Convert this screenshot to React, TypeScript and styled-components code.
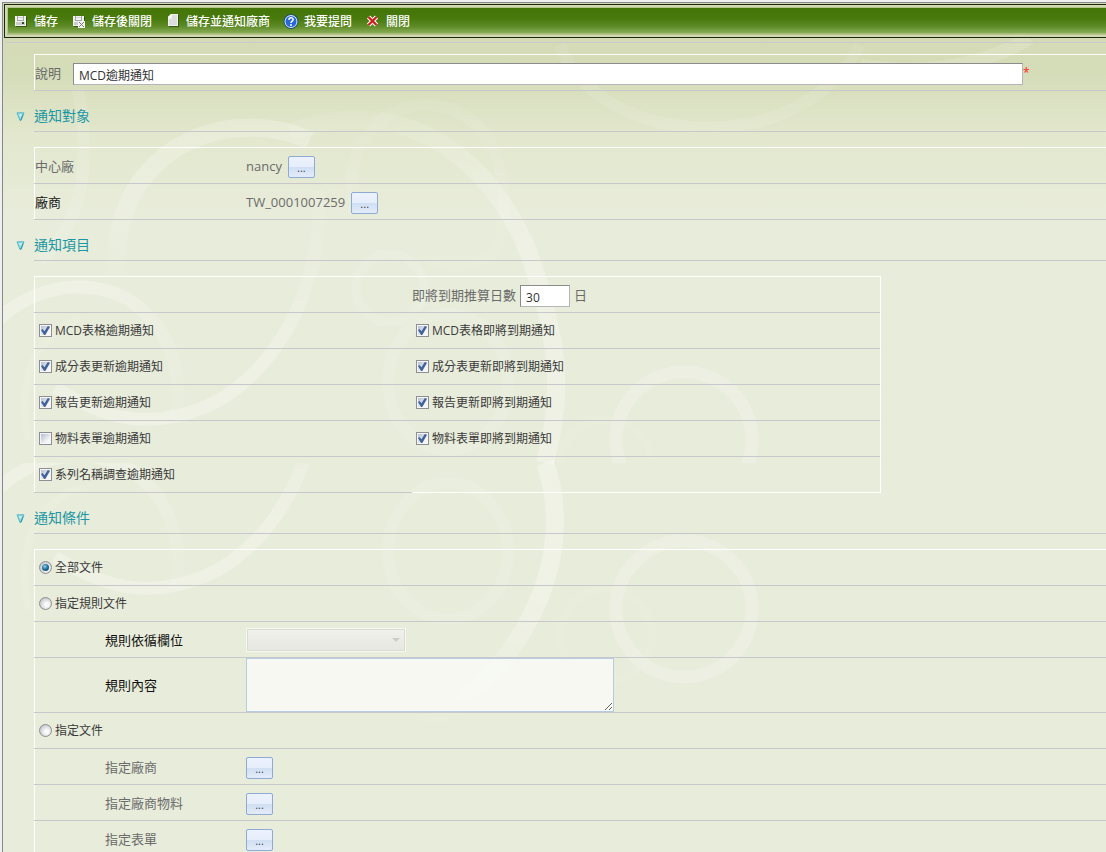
import React, { useState } from "react";
import styled, { createGlobalStyle, css } from "styled-components";

const GlobalStyle = createGlobalStyle`
  *, *::before, *::after { box-sizing: border-box; }
  body {
    margin: 0;
    background: #efefef;
    color: #6b6b6b;
    font: 13px/18px "Open Sans", "Noto Sans CJK TC", sans-serif;
  }
  button, input, select, textarea { font: inherit; color: inherit; margin: 0; }
`;

/* ---------- shell ---------- */

const Shell = styled.div`
  height: 100vh;
  padding: 2px 0 0 2px;
`;

const Frame = styled.div`
  position: relative;
  height: 100%;
  overflow: auto;
  scrollbar-width: none;
  border-top: 1px solid #85888a;
  border-left: 1px solid #85888a;
  padding: 1px 0 0 1px;
  background: linear-gradient(#d2d9b2, #d5dcb8 70px, #e2e7cd 130px, #e8ecda 210px);
`;

const Backdrop = styled.svg`
  position: absolute;
  top: 0;
  left: 0;
  width: 1100px;
  height: 848px;
  pointer-events: none;
`;

const Content = styled.div`
  position: relative;
`;

const ToolbarFrame = styled.div`
  border: 1px solid #1d2812;
  border-right: 0;
  padding: 2px 0 2px 2px;
  background: #d0d9b0;
`;

const Toolbar = styled.div`
  display: flex;
  align-items: center;
  gap: 13px;
  height: 28px;
  padding: 2px 0 0 5px;
  border: 1px solid #b4c48c;
  border-right: 0;
  background: linear-gradient(#447507, #48790d 40%, #5d8a26 70%, #84a951 94%, #b3c78b);
`;

const ToolButton = styled.button`
  display: flex;
  align-items: center;
  gap: 5px;
  padding: 0;
  border: 0;
  background: none;
  color: #fff;
  font-size: 12px;
  font-weight: 500;
  line-height: 18px;
  white-space: nowrap;
  cursor: pointer;

  svg { display: block; flex: none; }
`;

const Rule = styled.hr`
  height: 1px;
  margin: 4px 0 11px 2px;
  border: 0;
  background: #cac9cb;
`;

/* ---------- sections ---------- */

const SectionHeader = styled.div`
  display: flex;
  height: 41px;
  margin-bottom: 15px;
`;

const Toggle = styled.button`
  flex: none;
  width: 30px;
  padding: 10px 0 0 12px;
  border: 0;
  background: none;
  text-align: left;

  svg { display: block; }
`;

const SectionTitle = styled.h2`
  flex: 1;
  margin: 0;
  padding-top: 15px;
  border-bottom: 1px solid #c8c8cc;
  color: #1c97a4;
  font-size: 14px;
  font-weight: 400;
  line-height: 20px;
`;

const Panel = styled.div<{ $boxed?: boolean }>`
  margin-left: 30px;
  border-top: 1px solid #fff;
  border-left: 1px solid #fff;
  ${(p) =>
    p.$boxed &&
    css`
      display: grid;
      grid-template-columns: 378px 1fr;
      max-width: 847px;
      border-right: 1px solid #fff;
    `}
`;

const line = css`
  border-bottom: 1px solid #c8c8cc;
  margin-left: -1px;
  padding-left: 1px;
`;

const Row = styled.div`
  ${line}
  display: flex;
  align-items: center;
  min-height: 36px;
`;

const AreaRow = styled(Row)`
  align-items: stretch;
`;

const Cell = styled(Row)<{ $light?: boolean }>`
  ${(p) => p.$light && "border-bottom-color: #fff;"}

  &:nth-child(even) { padding-left: 0; }
`;

const DaysCell = styled(Cell)`
  gap: 4px;
`;

const Name = styled.label<{ $strong?: boolean; $indent?: boolean }>`
  display: flex;
  align-items: center;
  flex: none;
  width: 211px;
  padding-left: ${(p) => (p.$indent ? 70 : 0)}px;
  color: ${(p) => (p.$strong ? "#111" : "inherit")};
`;

const ShortName = styled.label`
  margin-right: 12px;
`;

const Value = styled.span`
  margin-right: 6px;
`;

const Choice = styled.label`
  display: flex;
  align-items: center;
  gap: 3px;
  padding-left: 4px;
  color: #3a3a3a;
  font-size: 12px;
`;

/* ---------- controls ---------- */

const TextInput = styled.input<{ $short?: boolean }>`
  ${(p) => (p.$short ? "width: 50px;" : "flex: 1; min-width: 0;")}
  height: 22px;
  margin-top: 3px;
  padding: 2px 5px 0;
  border: 1px solid;
  border-color: #8b8b8b #b5b5b9 #b5b5b9 #8b8b8b;
  border-radius: 0;
  outline: 0;
  background: #fff;
  color: #333;
  font-size: 12px;
`;

const Required = styled.span`
  width: 83px;
  color: #ff2020;
  font-size: 12px;
`;

const PickButton = styled.button`
  width: 27px;
  height: 22px;
  margin-top: 2px;
  padding: 2px 0 0;
  border: 1px solid #8fabd4;
  border-radius: 2px;
  background: linear-gradient(#ecf2fd, #e6eefb 48%, #d0dff3 52%, #e3ecfa);
  color: #444;
  font-size: 11px;
  line-height: 18px;
`;

const Check = styled.input`
  appearance: none;
  display: grid;
  place-items: center;
  flex: none;
  width: 13px;
  height: 13px;
  border: 1px solid #8e8f94;
  background: linear-gradient(135deg, #b4bfcf, #f6f6f6 75%) content-box, #f6f6f6;
  padding: 1px;

  &:checked::before {
    content: "";
    width: 9px;
    height: 9px;
    background: #41639c;
    clip-path: polygon(0 45%, 18% 34%, 38% 58%, 76% 0, 100% 8%, 48% 100%, 34% 100%);
  }
`;

const Radio = styled.input`
  appearance: none;
  display: grid;
  place-items: center;
  flex: none;
  width: 13px;
  height: 13px;
  border: 1px solid #8e8f8f;
  border-radius: 50%;
  background: radial-gradient(circle at 60% 60%, #fafafa 20%, #c4c8cc 75%);

  &:checked::before {
    content: "";
    width: 7px;
    height: 7px;
    border-radius: 50%;
    background: radial-gradient(circle at 40% 35%, #8fd3ee, #1c6a97 50%, #123a5a);
  }
`;

const SelectBox = styled.div`
  position: relative;
  display: flex;

  svg {
    position: absolute;
    top: 9px;
    right: 6px;
    pointer-events: none;
  }
`;

const Select = styled.select`
  appearance: none;
  width: 160px;
  height: 24px;
  border: 1px solid #f6f7f1;
  border-radius: 0;
  box-shadow: inset 0 0 0 1px #dadcd2;
  background: linear-gradient(#f0f1ea, #e6e7df);
  opacity: 1;
`;

const Area = styled.textarea`
  display: block;
  width: 368px;
  height: 54px;
  padding: 2px 4px;
  border: 1px solid #b8cbe0;
  border-radius: 0;
  background: rgba(255, 255, 255, 0.62);
`;

/* ---------- drawings ---------- */

const SaveIcon = ({ close }: { close?: boolean }) => (
  <svg width="16" height="16" viewBox="0 0 16 16" shapeRendering="crispEdges" aria-hidden="true">
    <path d="M3 3h11v10H3z" fill="#27450a" opacity=".7" />
    <path d="M2 2h11v10H2z" fill="#f0f1f0" />
    <path d="M4 2h1v4H4zM10 2h1v4h-1zM4 6h7v1H4z" fill="#a4a8a4" />
    <path d="M5 3h5v1H5z" fill="#cfd2cf" />
    <path d="M3 8h9v3H3z" fill="#c9ccc9" />
    <path d="M9 8h2v2H9z" fill="#33501a" />
    {close && (
      <>
        <path d="M7 7h7v7H7z" fill="#f4f4f4" />
        <path d="M8 8h1v1h1v1h1V9h1V8h1v1h-1v1h-1v1h1v1h1v1h-1v-1h-1v-1h-1v1H9v1H8v-1h1v-1h1v-1H9V9H8z" fill="#777" />
      </>
    )}
  </svg>
);

const PageIcon = () => (
  <svg width="16" height="16" viewBox="0 0 16 16" aria-hidden="true">
    <path d="M7 1h7v12H4V5z" fill="#27450a" opacity=".7" />
    <path d="M6 0h7v12H3V3z" fill="#f0f1f0" />
    <path d="M7 1h5v10H4V5h3z" fill="#dcdedc" />
    <path d="M6 0v3H3z" fill="#fff" />
  </svg>
);

const HelpIcon = () => (
  <svg width="16" height="16" viewBox="0 0 16 16" aria-hidden="true">
    <circle cx="8" cy="7.5" r="7.5" fill="#1f4f72" />
    <circle cx="8" cy="7.5" r="6.5" fill="#d9e8fa" />
    <circle cx="8" cy="7.5" r="5.5" fill="#2767d8" />
    <path d="M5.900 5.900c.1-3 4.400-2.700 4.200-.2C10 7.200 8 7.200 8 9" fill="none" stroke="#fff" strokeWidth="1.600" />
    <circle cx="8" cy="11" r="1" fill="#fff" />
  </svg>
);

const CloseIcon = () => (
  <svg width="16" height="16" viewBox="0 0 16 16" aria-hidden="true">
    <path d="M3.500 3l8 8M11.500 3l-8 8" stroke="#fff" strokeWidth="4.400" />
    <path d="M3.500 3l8 8M11.500 3l-8 8" stroke="#c9201a" strokeWidth="2.400" />
  </svg>
);

const ToggleIcon = () => (
  <svg width="9" height="9" viewBox="0 0 9 9" aria-hidden="true">
    <path d="M1 .800h7L5.200 8.200H3.800z" fill="#8fd8e2" stroke="#4fb6c6" strokeWidth=".9" />
    <path d="M2.800 2.200h3.400L4.500 5z" fill="#d6f2f4" />
    <path d="M7 2.500L5 8H4" fill="none" stroke="#2b93a5" strokeWidth=".9" />
  </svg>
);

const Rings = () => (
  <g fill="none" stroke="#fff">
    <path d="M318 190C326 290 270 380 205 407S95 412 55 388" strokeWidth="13" stroke="url(#arc)" />
    <path d="M-4 322C40 278 105 278 140 308S182 380 176 420" strokeWidth="13" stroke="url(#left)" />
    <path d="M28 440C18 380 30 340 80 318" strokeWidth="8" opacity=".1" />
    <ellipse cx="448" cy="382" rx="60" ry="68" strokeWidth="12" opacity=".12" />
    <circle cx="684" cy="440" r="68" strokeWidth="13" opacity=".2" />
    <circle cx="606" cy="466" r="46" strokeWidth="8" opacity=".06" />
  </g>
);

const Fade = ({ id, from, to, box }: { id: string; from: number; to: number; box: number[] }) => (
  <linearGradient id={id} gradientUnits="userSpaceOnUse" x1={box[0]} y1={box[1]} x2={box[2]} y2={box[3]}>
    <stop offset="0" stopColor="#fff" stopOpacity={from} />
    <stop offset="1" stopColor="#fff" stopOpacity={to} />
  </linearGradient>
);

const Swirls = () => (
  <Backdrop viewBox="3 3 1100 848" aria-hidden="true">
    <defs>
      <clipPath id="upper"><path d="M0 0h1106v463H0z" /></clipPath>
      <clipPath id="lower"><path d="M0 463h1106v400H0z" /></clipPath>
      <Fade id="rise" from={0.08} to={0.28} box={[380, 110, 500, 300]} />
      <Fade id="fall" from={0.3} to={0} box={[0, 600, 0, 735]} />
      <Fade id="band" from={0} to={0.22} box={[0, 290, 0, 190]} />
      <Fade id="arc" from={0.08} to={0.26} box={[0, 230, 0, 360]} />
      <Fade id="left" from={0.28} to={0.08} box={[80, 290, 180, 390]} />
    </defs>
    <g fill="none" stroke="#fff">
      <path d="M290 132C420 85 505 180 533 265S562 400 545 463" stroke="url(#rise)" strokeWidth="18" />
      <path d="M545 463C580 560 520 680 410 735" stroke="url(#fall)" strokeWidth="18" />
      <path d="M118 290C100 160 215 100 310 140" stroke="url(#band)" strokeWidth="18" />
      <path d="M352 200C340 90 480 70 500 170S470 270 430 262" strokeWidth="12" opacity=".08" />
      <circle cx="390" cy="288" r="34" strokeWidth="9" opacity=".12" />
      <path d="M78 90C90 150 88 220 40 260" strokeWidth="12" opacity=".12" />
      <path d="M560 45C600 150 800 160 860 45" strokeWidth="12" opacity=".1" />
      <path d="M860 66Q960 80 1030 38" strokeWidth="14" opacity=".14" />
    </g>
    <g clipPath="url(#upper)"><Rings /></g>
    <g clipPath="url(#lower)"><g transform="translate(0 169)"><Rings /></g></g>
  </Backdrop>
);

/* ---------- page ---------- */

const tools = [
  { text: "儲存", icon: <SaveIcon /> },
  { text: "儲存後關閉", icon: <SaveIcon close /> },
  { text: "儲存並通知廠商", icon: <PageIcon /> },
  { text: "我要提問", icon: <HelpIcon /> },
  { text: "關閉", icon: <CloseIcon /> },
];

const items: { text: string; on?: boolean }[] = [
  { text: "MCD表格逾期通知", on: true },
  { text: "MCD表格即將到期通知", on: true },
  { text: "成分表更新逾期通知", on: true },
  { text: "成分表更新即將到期通知", on: true },
  { text: "報告更新逾期通知", on: true },
  { text: "報告更新即將到期通知", on: true },
  { text: "物料表單逾期通知" },
  { text: "物料表單即將到期通知", on: true },
  { text: "系列名稱調查逾期通知", on: true },
];

const Header = ({ title }: { title: string }) => (
  <SectionHeader>
    <Toggle type="button" aria-label={title}><ToggleIcon /></Toggle>
    <SectionTitle>{title}</SectionTitle>
  </SectionHeader>
);

export default function App() {
  const [scope, setScope] = useState("all");
  const scopeRow = (value: string, text: string) => (
    <Row>
      <Choice>
        <Radio type="radio" name="scope" checked={scope === value} onChange={() => setScope(value)} />
        {text}
      </Choice>
    </Row>
  );

  return (
    <Shell>
      <GlobalStyle />
      <Frame>
        <Swirls />
        <Content>
          <ToolbarFrame>
            <Toolbar role="toolbar">
              {tools.map((t) => (
                <ToolButton key={t.text} type="button">{t.icon}{t.text}</ToolButton>
              ))}
            </Toolbar>
          </ToolbarFrame>
          <Rule />

          <Panel>
            <Row>
              <ShortName htmlFor="subject">說明</ShortName>
              <TextInput id="subject" defaultValue="MCD逾期通知" />
              <Required>*</Required>
            </Row>
          </Panel>

          <Header title="通知對象" />
          <Panel>
            <Row>
              <Name htmlFor="center">中心廠</Name>
              <Value>nancy</Value>
              <PickButton id="center" type="button">...</PickButton>
            </Row>
            <Row>
              <Name htmlFor="vendor" $strong>廠商</Name>
              <Value>TW_0001007259</Value>
              <PickButton id="vendor" type="button">...</PickButton>
            </Row>
          </Panel>

          <Header title="通知項目" />
          <Panel $boxed>
            <Cell />
            <DaysCell>
              <label htmlFor="days">即將到期推算日數</label>
              <TextInput id="days" $short defaultValue="30" />
              <span>日</span>
            </DaysCell>
            {items.map((item) => (
              <Cell key={item.text}>
                <Choice>
                  <Check type="checkbox" defaultChecked={item.on} />
                  {item.text}
                </Choice>
              </Cell>
            ))}
            <Cell $light />
          </Panel>

          <Header title="通知條件" />
          <Panel>
            {scopeRow("all", "全部文件")}
            {scopeRow("rule", "指定規則文件")}
            <Row>
              <Name htmlFor="field" $strong $indent>規則依循欄位</Name>
              <SelectBox>
                <Select id="field" disabled />
                <svg width="8" height="6" viewBox="0 0 8 6" aria-hidden="true">
                  <path d="M0 1h8L4 5z" fill="#cdcfc6" />
                </svg>
              </SelectBox>
            </Row>
            <AreaRow>
              <Name htmlFor="rule" $strong $indent>規則內容</Name>
              <Area id="rule" disabled />
            </AreaRow>
            {scopeRow("chosen", "指定文件")}
            {["指定廠商", "指定廠商物料", "指定表單"].map((text) => (
              <Row key={text}>
                <Name htmlFor={text} $indent>{text}</Name>
                <PickButton id={text} type="button">...</PickButton>
              </Row>
            ))}
          </Panel>
        </Content>
      </Frame>
    </Shell>
  );
}
